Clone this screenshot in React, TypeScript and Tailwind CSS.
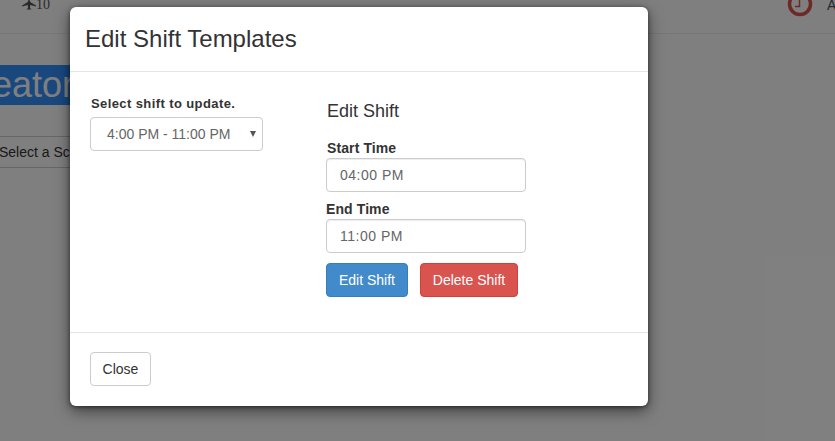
import React from "react";

function TimeField({ label, value, className }: { label: string; value: string; className: string }) {
  return (
    <div className="flex flex-col">
      <label className={`text-sm font-bold leading-[20px] tracking-[0.1px] text-[#333] ${className}`}>{label}</label>
      <div className="w-[200px] h-[34px] px-[13px] flex items-center bg-white border border-[#ccc] rounded text-sm text-[#666] tracking-[0.5px] shadow-[inset_0_1px_1px_rgba(0,0,0,0.075)]">
        {value}
      </div>
    </div>
  );
}

export default function App() {
  return (
    <div className="relative w-[835px] h-[441px] overflow-hidden bg-white font-['Liberation_Sans',Arial,sans-serif] text-[#333]">
      {/* page behind the modal */}
      <div className="h-[34px] border-b border-[#eee] flex justify-between">
        <div className="pl-[22px] flex items-start text-sm leading-[10px] font-['Liberation_Serif',serif] text-[#555]">
          <svg width="14" height="12" viewBox="0 0 14 12" className="-mt-[2px]" fill="#555">
            <path d="M7 0 L8.2 4 L14 7.5 L14 8.5 L8.2 7 L8 10 L9.5 11.5 L4.500 11.500 L6 10 L5.800 7 L0 8.500 L0 7.500 L5.800 4 Z" />
          </svg>
          <span>10</span>
        </div>
        <div className="flex items-start">
          <svg width="26" height="17" viewBox="0 0 26 17" className="mr-[14px]" fill="none" stroke="#d9534f" strokeWidth="3.5">
            <circle cx="13" cy="4" r="10.500" />
            <path d="M12.500 0 V6.500 H8" strokeWidth="1.500" />
          </svg>
          <span className="w-[8px] text-sm leading-[10px] text-[#555]">A</span>
        </div>
      </div>
      <div className="mt-[31px] w-[70px] h-[40px] overflow-hidden bg-[#3390ff] text-white text-[36px] leading-[40px] whitespace-nowrap">
        <span className="block -ml-[8px]">eator</span>
      </div>
      <div className="mt-[31px] w-[70px] h-[32px] border-y border-[#ccc] text-sm leading-[30px] text-[#333] whitespace-nowrap overflow-hidden">
        <span className="block -ml-px">Select a Schedule</span>
      </div>

      {/* backdrop */}
      <div className="absolute inset-0 bg-black/50" />

      {/* modal */}
      <div className="absolute left-[70px] top-[7px] w-[578px] h-[399px] bg-white rounded-md flex flex-col shadow-[0_5px_15px_rgba(0,0,0,0.5),0_1px_4px_rgba(0,0,0,0.5)]">
        <div className="h-[65px] shrink-0 border-b border-[#e5e5e5] pl-[15px] flex items-center">
          <h4 className="text-2xl leading-[26px] text-[#333]">Edit Shift Templates</h4>
        </div>
        <div className="flex-1 flex pl-[20px] pt-[15px]">
          <div className="w-[236px] shrink-0 pt-[7px]">
            <label className="block pl-px text-[13px] font-bold leading-[20px] tracking-[0.4px] text-[#333]">
              Select shift to update.
            </label>
            <div className="relative mt-[3px] w-[173px] h-[34px] pl-[16px] flex items-center bg-white border border-[#ccc] rounded text-sm text-[#666]">
              4:00 PM - 11:00 PM
              <span className="absolute right-[6px] top-[13px] w-0 h-0 border-x-[3.5px] border-x-transparent border-t-[6px] border-t-[#555]" />
            </div>
          </div>
          <div className="flex flex-col">
            <h5 className="pl-px mt-[14px] mb-[17px] text-lg leading-[20px] text-[#333]">Edit Shift</h5>
            <TimeField label="Start Time" value="04:00 PM" className="pl-px" />
            <div className="mt-[7px]">
              <TimeField label="End Time" value="11:00 PM" className="" />
            </div>
            <div className="mt-[10px] flex gap-[12px]">
              <button className="w-[82px] h-[34px] bg-[#428bca] border border-[#357ebd] rounded text-sm text-white">
                Edit Shift
              </button>
              <button className="w-[98px] h-[34px] bg-[#d9534f] border border-[#d43f3a] rounded text-sm text-white">
                Delete Shift
              </button>
            </div>
          </div>
        </div>
        <div className="h-[74px] shrink-0 border-t border-[#e5e5e5] pl-[20px] pt-[19px]">
          <button className="w-[61px] h-[34px] bg-white border border-[#ccc] rounded text-sm text-[#333]">Close</button>
        </div>
      </div>
    </div>
  );
}
